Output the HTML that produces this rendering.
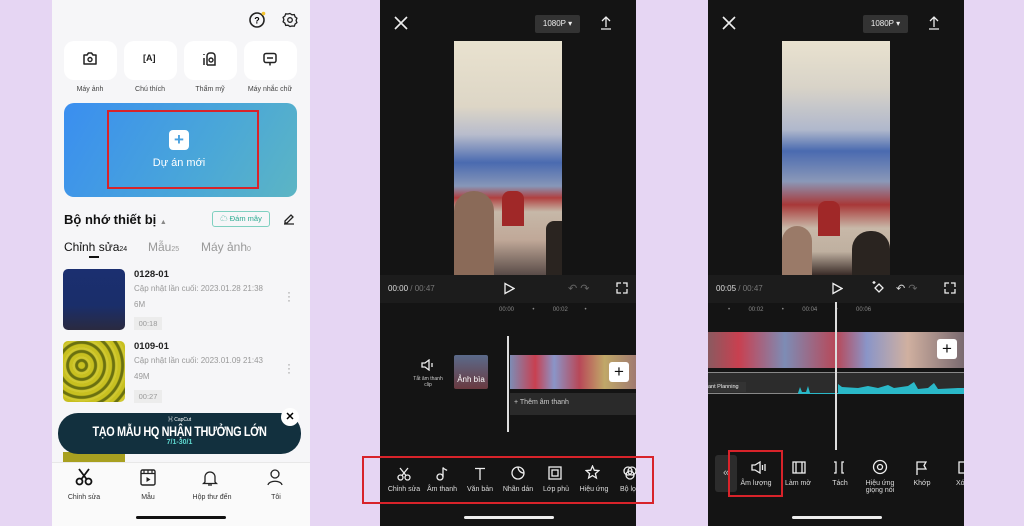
<!DOCTYPE html>
<html><head><meta charset="utf-8"><style>
*{margin:0;padding:0;box-sizing:border-box}
body{width:1024px;height:526px;background:#e6d6f3;position:relative;overflow:hidden;font-family:"Liberation Sans","Noto Sans CJK SC",sans-serif}
.a{position:absolute}
.p1{left:52px;top:0;width:258px;height:526px;background:#f6f6f8}
.dk{background:#141414;top:0;width:256px;height:526px}
.tile{background:#fff;border-radius:10px;width:53px;height:39px;top:41px}
.lbl{font-size:7px;color:#444;top:86px;width:64px;text-align:center}
.g{color:#999}
.vid{overflow:hidden;background:linear-gradient(180deg,#e9e2cf 0%,#ddd6c6 28%,#b8bccc 40%,#4a6ab0 52%,#8797b8 62%,#b04040 67%,#c6b8a8 73%,#c0a898 85%,#5a4c48 100%)}
.w{color:#eee}
.tool{font-size:7px;color:#ddd;text-align:center;width:40px}
svg.i{position:absolute;fill:none;stroke:#eee;stroke-width:1.3}
</style></head><body>
<!-- Panel 1 -->
<div class="a p1">
 <svg class="a" style="left:196px;top:11px" width="18" height="18" viewBox="0 0 18 18"><circle cx="9" cy="9" r="7" fill="none" stroke="#222" stroke-width="1.6"/><text x="9" y="12.5" font-size="9" text-anchor="middle" font-family="Liberation Sans" font-weight="bold">?</text><circle cx="15.5" cy="2.5" r="1.8" fill="#f4c430"/></svg>
 <svg class="a" style="left:230px;top:12px" width="16" height="16" viewBox="0 0 16 16"><path d="M8 1.5l2 1.3 2.3-.2.8 2.2 1.8 1.4-.8 2.2.8 2.2-1.8 1.4-.8 2.2-2.3-.2L8 14.5l-2-1.3-2.3.2-.8-2.2L1.1 9.8 1.9 7.6 1.1 5.4 2.9 4l.8-2.2 2.3.2z" fill="none" stroke="#222" stroke-width="1.3"/><circle cx="8" cy="8" r="2.3" fill="none" stroke="#222" stroke-width="1.3"/></svg>
 <div class="a tile" style="left:12px"></div><div class="a tile" style="left:72px"></div><div class="a tile" style="left:132px"></div><div class="a tile" style="left:192px"></div>
 <svg class="a" style="left:30px;top:52px" width="16" height="14" viewBox="0 0 16 14"><path d="M2 3h3l1.5-2h3L11 3h3v9H2z" fill="none" stroke="#222" stroke-width="1.5" stroke-linejoin="round"/><circle cx="8" cy="7.5" r="2" fill="none" stroke="#222" stroke-width="1.4"/></svg>
 <div class="a" style="left:91px;top:53px;font-size:9px;font-weight:bold;color:#222">[A]</div>
 <svg class="a" style="left:150px;top:52px" width="16" height="14" viewBox="0 0 16 14"><path d="M2 6v7M2 2v1M5 13V4a3 3 0 013-3h2a3 3 0 013 3v9H5" fill="none" stroke="#222" stroke-width="1.5"/><circle cx="9" cy="8" r="2" fill="none" stroke="#222" stroke-width="1.4"/></svg>
 <svg class="a" style="left:210px;top:52px" width="16" height="15" viewBox="0 0 16 15"><rect x="2" y="1.5" width="12" height="9" rx="2" fill="none" stroke="#222" stroke-width="1.5"/><path d="M5 6h6M8 10.5v3" stroke="#222" stroke-width="1.5"/></svg>
 <div class="a lbl" style="left:6px">Máy ảnh</div><div class="a lbl" style="left:66px">Chú thích</div><div class="a lbl" style="left:126px">Thẩm mỹ</div><div class="a lbl" style="left:186px">Máy nhắc chữ</div>
 <div class="a" style="left:12px;top:103px;width:233px;height:94px;border-radius:10px;background:linear-gradient(120deg,#3a8ef0,#4aa7d8 60%,#5cb5c4)"></div>
 <div class="a" style="left:117px;top:130px;width:20px;height:20px;background:#fff;border-radius:4px;color:#4aa2e0;font-size:17px;line-height:20px;text-align:center;font-weight:bold">+</div>
 <div class="a" style="left:72px;top:157px;width:110px;text-align:center;color:#fff;font-size:11px">Dự án mới</div>
 <div class="a" style="left:55px;top:110px;width:152px;height:79px;border:2.5px solid #d8232a"></div>
 <div class="a" style="left:12px;top:212px;font-size:13px;font-weight:bold;color:#111">Bộ nhớ thiết bị <span style="font-size:7px;color:#888">▲</span></div>
 <div class="a" style="left:160px;top:211px;width:58px;height:16px;border:1px solid #7fd0c0;border-radius:3px;font-size:7.5px;color:#2aaa90;text-align:center;line-height:14px">☁ Đám mây</div>
 <svg class="a" style="left:230px;top:211px" width="14" height="14" viewBox="0 0 14 14"><path d="M3 10l6-6 2 2-6 6H3zM2 13h10" fill="none" stroke="#222" stroke-width="1.3"/></svg>
 <div class="a" style="left:12px;top:240px;font-size:12px;color:#111">Chỉnh sửa<span style="font-size:7px">24</span></div>
 <div class="a" style="left:37px;top:256px;width:10px;height:2px;background:#111"></div>
 <div class="a g" style="left:96px;top:240px;font-size:12px">Mẫu<span style="font-size:7px">25</span></div>
 <div class="a g" style="left:149px;top:240px;font-size:12px">Máy ảnh<span style="font-size:7px">0</span></div>
 <div class="a" style="left:11px;top:269px;width:62px;height:61px;border-radius:5px;background:linear-gradient(180deg,#1b2f70,#1a2e6a 60%,#2a2a40)"></div>
 <div class="a" style="left:82px;top:269px;font-size:9.5px;font-weight:bold;color:#222">0128-01</div>
 <div class="a g" style="left:82px;top:284px;font-size:8px">Cập nhật lần cuối: 2023.01.28 21:38</div>
 <div class="a g" style="left:82px;top:300px;font-size:8px">6M</div>
 <div class="a g" style="left:82px;top:317px;width:28px;height:13px;background:#ececec;font-size:7.5px;text-align:center;line-height:13px">00:18</div>
 <div class="a g" style="left:235px;top:290px;font-size:12px;line-height:4px">·<br>·<br>·</div>
 <div class="a" style="left:11px;top:341px;width:62px;height:61px;border-radius:5px;background:repeating-radial-gradient(circle at 30% 40%,#c8c020 0 3px,#6a7010 4px 6px,#d0c830 7px 9px)"></div>
 <div class="a" style="left:82px;top:341px;font-size:9.5px;font-weight:bold;color:#222">0109-01</div>
 <div class="a g" style="left:82px;top:356px;font-size:8px">Cập nhật lần cuối: 2023.01.09 21:43</div>
 <div class="a g" style="left:82px;top:372px;font-size:8px">49M</div>
 <div class="a g" style="left:82px;top:390px;width:28px;height:13px;background:#ececec;font-size:7.5px;text-align:center;line-height:13px">00:27</div>
 <div class="a g" style="left:235px;top:362px;font-size:12px;line-height:4px">·<br>·<br>·</div>
 <div class="a" style="left:11px;top:452px;width:62px;height:14px;background:#a8a020"></div>
 <div class="a" style="left:6px;top:413px;width:243px;height:41px;border-radius:20px;background:#12303e;text-align:center;color:#fff;overflow:hidden">
  <div style="font-size:5px;margin-top:3px">⌘ CapCut</div>
  <div style="font-size:14px;font-weight:bold;letter-spacing:-0.5px;transform:scaleX(.78);white-space:nowrap">TẠO MẪU HQ NHẬN THƯỞNG LỚN</div>
  <div style="font-size:7px;color:#5fd8d0;font-weight:bold">7/1-30/1</div>
 </div>
 <div class="a" style="left:229px;top:408px;width:18px;height:18px;border-radius:50%;background:#fff;font-size:11px;text-align:center;line-height:18px;font-weight:bold">✕</div>
 <div class="a" style="left:0;top:462px;width:258px;height:64px;background:#fafafa;border-top:1px solid #e8e8e8"></div>
 <svg class="a" style="left:23px;top:468px" width="18" height="18" viewBox="0 0 18 18"><circle cx="4.5" cy="13.5" r="3" fill="none" stroke="#111" stroke-width="1.8"/><circle cx="13.5" cy="13.5" r="3" fill="none" stroke="#111" stroke-width="1.8"/><path d="M6.5 11L14 1M11.5 11L4 1" stroke="#111" stroke-width="1.8"/></svg>
 <svg class="a" style="left:88px;top:469px" width="16" height="17" viewBox="0 0 16 17"><rect x="1" y="1" width="14" height="15" rx="1.5" fill="none" stroke="#222" stroke-width="1.4"/><path d="M1 4.5h14M4 1v3.5M8 1v3.5M12 1v3.5" stroke="#222" stroke-width="1.2"/><path d="M6.5 8v5l4-2.5z" fill="#222"/></svg>
 <svg class="a" style="left:150px;top:469px" width="16" height="18" viewBox="0 0 16 18"><path d="M3 13V8a5 5 0 0110 0v5l1.5 1.5h-13z M6 16h4" fill="none" stroke="#222" stroke-width="1.3"/></svg>
 <svg class="a" style="left:215px;top:468px" width="16" height="18" viewBox="0 0 16 18"><circle cx="8" cy="6" r="4" fill="none" stroke="#222" stroke-width="1.3"/><path d="M1 17c1-5 13-5 14 0" fill="none" stroke="#222" stroke-width="1.3"/></svg>
 <div class="a" style="left:6px;top:494px;width:52px;text-align:center;font-size:7px;color:#333">Chỉnh sửa</div>
 <div class="a" style="left:70px;top:494px;width:52px;text-align:center;font-size:7px;color:#333">Mẫu</div>
 <div class="a" style="left:134px;top:494px;width:52px;text-align:center;font-size:7px;color:#333">Hộp thư đến</div>
 <div class="a" style="left:198px;top:494px;width:52px;text-align:center;font-size:7px;color:#333">Tôi</div>
 <div class="a" style="left:84px;top:516px;width:90px;height:3px;border-radius:2px;background:#111"></div>
</div>

<!-- Panel 2 -->
<div class="a dk" style="left:380px">
 <svg class="i" style="left:14px;top:16px" width="14" height="14"><path d="M1 1l12 12M13 1L1 13" stroke-width="1.6"/></svg>
 <div class="a" style="left:155px;top:15px;width:45px;height:18px;background:#333;border-radius:2px;font-size:8px;color:#eee;text-align:center;line-height:18px">1080P ▾</div>
 <svg class="i" style="left:220px;top:16px" width="12" height="14"><path d="M6 11V1M2 5l4-4 4 4M1 13h10"/></svg>
 <div class="a vid" style="left:74px;top:41px;width:108px;height:234px">
  <div class="a" style="left:0;top:150px;width:40px;height:84px;border-radius:20px 20px 0 0;background:#8a6a58"></div>
  <div class="a" style="left:48px;top:150px;width:22px;height:35px;background:#a02828;border-radius:8px 8px 0 0"></div>
  <div class="a" style="left:92px;top:180px;width:16px;height:54px;background:#2a2420;border-radius:8px 0 0 0"></div>
 </div>
 <div class="a" style="left:0;top:275px;width:256px;height:28px;background:#1c1c1c"></div>
 <div class="a" style="left:8px;top:284px;font-size:8px;color:#ddd">00:00 <span style="color:#777">/ 00:47</span></div>
 <svg class="i" style="left:123px;top:282px" width="12" height="13"><path d="M2 1.5l9 5-9 5z"/></svg>
 <div class="a" style="left:188px;top:282px;font-size:11px;color:#666">↶ ↷</div>
 <svg class="i" style="left:236px;top:282px" width="12" height="12"><path d="M1 5V1h4M7 1h4v4M11 7v4H7M5 11H1V7"/></svg>
 <div class="a" style="left:119px;top:307px;font-size:6px;color:#888;white-space:nowrap">00:00 &nbsp;&nbsp;&nbsp;&nbsp;&nbsp;&nbsp;&nbsp;&nbsp;&nbsp;&nbsp;•&nbsp;&nbsp;&nbsp;&nbsp;&nbsp;&nbsp;&nbsp;&nbsp;&nbsp;&nbsp; 00:02 &nbsp;&nbsp;&nbsp;&nbsp;&nbsp;&nbsp;&nbsp;&nbsp;&nbsp;•</div>
 <svg class="i" style="left:41px;top:359px" width="14" height="12"><path d="M1 4h3l4-3v10L4 8H1z M11 4v4"/></svg>
 <div class="a" style="left:33px;top:376px;width:30px;text-align:center;font-size:5px;color:#ccc">Tắt âm thanh clip</div>
 <div class="a" style="left:74px;top:355px;width:34px;height:34px;background:linear-gradient(#5a6a8a,#6a3a40);border-radius:2px;font-size:8px;color:#fff;text-align:center;padding-top:20px">Ảnh bìa</div>
 <div class="a" style="left:127px;top:336px;width:2px;height:96px;background:#ddd"></div>
 <div class="a" style="left:130px;top:355px;width:126px;height:34px;background:linear-gradient(90deg,#7d8cb5,#c84050 20%,#8a95c8 35%,#b84858 55%,#c0a868 75%,#a07a70)"></div>
 <div class="a" style="left:229px;top:362px;width:20px;height:20px;background:#fff;border-radius:3px;font-size:17px;line-height:20px;text-align:center;color:#111">+</div>
 <div class="a" style="left:130px;top:393px;width:126px;height:22px;background:#2a2a2a;font-size:7px;color:#ccc;padding:6px 4px">+ Thêm âm thanh</div>
 <div class="a" style="left:-18px;top:456px;width:292px;height:48px;border:2.5px solid #d8232a"></div>
 <svg class="i" style="left:17px;top:467px" width="14" height="14"><circle cx="3.5" cy="10.5" r="2.5"/><circle cx="10.5" cy="10.5" r="2.5"/><path d="M5 8.5L11 1M9 8.5L3 1"/></svg>
 <svg class="i" style="left:56px;top:466px" width="12" height="15"><circle cx="4" cy="11" r="3"/><path d="M7 11V1.5c1 2 3 2 4 3"/></svg>
 <svg class="i" style="left:94px;top:467px" width="12" height="13"><path d="M1 1.5h10M6 1.5V13"/></svg>
 <svg class="i" style="left:131px;top:466px" width="14" height="14"><path d="M7 1a6 6 0 106 6 6 6 0 00-6-6zM7 1a6 6 0 006 6"/></svg>
 <svg class="i" style="left:168px;top:466px" width="14" height="14"><rect x="1" y="1" width="12" height="12"/><rect x="4" y="4" width="6" height="6"/></svg>
 <svg class="i" style="left:205px;top:465px" width="15" height="15"><path d="M7.5 1l1.8 4.2 4.5.4-3.4 3 1 4.4-3.9-2.4-3.9 2.4 1-4.4-3.4-3 4.5-.4z"/></svg>
 <svg class="i" style="left:243px;top:466px" width="14" height="14"><circle cx="5" cy="5" r="4"/><circle cx="9" cy="5" r="4"/><circle cx="7" cy="9" r="4"/></svg>
 <div class="a tool" style="left:4px;top:486px">Chỉnh sửa</div><div class="a tool" style="left:42px;top:486px">Âm thanh</div><div class="a tool" style="left:80px;top:486px">Văn bản</div><div class="a tool" style="left:118px;top:486px">Nhãn dán</div><div class="a tool" style="left:156px;top:486px">Lớp phủ</div><div class="a tool" style="left:194px;top:486px">Hiệu ứng</div><div class="a tool" style="left:240px;top:486px;text-align:left">Bộ lọ</div>
 <div class="a" style="left:84px;top:516px;width:90px;height:3px;border-radius:2px;background:#eee"></div>
</div>

<!-- Panel 3 -->
<div class="a dk" style="left:708px">
 <svg class="i" style="left:14px;top:16px" width="14" height="14"><path d="M1 1l12 12M13 1L1 13" stroke-width="1.6"/></svg>
 <div class="a" style="left:155px;top:15px;width:45px;height:18px;background:#333;border-radius:2px;font-size:8px;color:#eee;text-align:center;line-height:18px">1080P ▾</div>
 <svg class="i" style="left:220px;top:16px" width="12" height="14"><path d="M6 11V1M2 5l4-4 4 4M1 13h10"/></svg>
 <div class="a vid" style="left:74px;top:41px;width:108px;height:234px;background:linear-gradient(180deg,#e9e2cf 0%,#d8d3c8 20%,#b0b8cc 38%,#4a6ab0 47%,#8a98b8 60%,#a83838 70%,#c8b8a8 80%,#bfb0a0 90%,#3a2c28 100%)">
  <div class="a" style="left:0;top:185px;width:30px;height:49px;border-radius:15px 15px 0 0;background:#9a7a68"></div>
  <div class="a" style="left:36px;top:160px;width:22px;height:35px;background:#a02828;border-radius:8px 8px 0 0"></div>
  <div class="a" style="left:70px;top:190px;width:38px;height:44px;background:#2a2420;border-radius:18px 18px 0 0"></div>
 </div>
 <div class="a" style="left:0;top:275px;width:256px;height:28px;background:#1c1c1c"></div>
 <div class="a" style="left:8px;top:284px;font-size:8px;color:#ddd">00:05 <span style="color:#777">/ 00:47</span></div>
 <svg class="i" style="left:123px;top:282px" width="12" height="13"><path d="M2 1.5l9 5-9 5z"/></svg>
 <svg class="i" style="left:163px;top:280px" width="16" height="16"><path d="M8 4l4 4-4 4-4-4z M3 1v3M1.5 2.5h3"/></svg>
 <div class="a" style="left:188px;top:282px;font-size:11px;color:#ddd">↶ <span style="color:#666">↷</span></div>
 <svg class="i" style="left:236px;top:282px" width="12" height="12"><path d="M1 5V1h4M7 1h4v4M11 7v4H7M5 11H1V7"/></svg>
 <div class="a" style="left:20px;top:307px;font-size:6px;color:#888;white-space:nowrap">•&nbsp;&nbsp;&nbsp;&nbsp;&nbsp;&nbsp;&nbsp;&nbsp;&nbsp;&nbsp; 00:02 &nbsp;&nbsp;&nbsp;&nbsp;&nbsp;&nbsp;&nbsp;&nbsp;&nbsp;&nbsp;•&nbsp;&nbsp;&nbsp;&nbsp;&nbsp;&nbsp;&nbsp;&nbsp;&nbsp;&nbsp; 00:04 &nbsp;&nbsp;&nbsp;&nbsp;&nbsp;&nbsp;&nbsp;&nbsp;&nbsp;&nbsp;•&nbsp;&nbsp;&nbsp;&nbsp;&nbsp;&nbsp;&nbsp;&nbsp;&nbsp;&nbsp; 00:06</div>
 <div class="a" style="left:0;top:332px;width:256px;height:36px;background:linear-gradient(90deg,#8a5a60,#c84050 12%,#7d8cb5 30%,#b84858 50%,#8a95c8 62%,#d0b0a0 78%,#7a6a70)"></div>
 <div class="a" style="left:229px;top:339px;width:20px;height:20px;background:#fff;border-radius:3px;font-size:17px;line-height:20px;text-align:center;color:#111">+</div>
 <div class="a" style="left:0;top:372px;width:256px;height:22px;background:#2c2c2c;border-top:1px solid #888;border-bottom:1px solid #888"></div>
 <div class="a" style="left:0;top:382px;width:38px;height:10px;background:#333;font-size:5.5px;color:#eee;line-height:10px">ant Planning</div>
 <svg class="a" style="left:90px;top:376px" width="166" height="18"><path d="M0 17L2 11 4 16 8 16 10 10 12 17H40V8L44 11 60 12 70 10 80 12 90 9 96 12 110 10 116 6 120 13 130 12 136 7 140 13 160 12 166 12V18H0z" fill="#2ab8c8"/></svg>
 <div class="a" style="left:127px;top:302px;width:2px;height:148px;background:#ddd"></div>
 <div class="a" style="left:7px;top:455px;width:22px;height:37px;background:#2c2c2c;border-radius:3px;font-size:11px;color:#bbb;text-align:center;line-height:37px">«</div>
 <div class="a" style="left:20px;top:450px;width:55px;height:47px;border:2.5px solid #d8232a"></div>
 <svg class="i" style="left:43px;top:461px" width="16" height="13"><path d="M1 4h3l5-3v11L4 9H1z M11.5 4v5M14 3v7"/></svg>
 <svg class="i" style="left:84px;top:461px" width="14" height="13"><rect x="1" y="1" width="12" height="11"/><path d="M4 1v11M10 1v11"/></svg>
 <svg class="i" style="left:125px;top:461px" width="12" height="13"><path d="M1 1h2v11H1M11 1H9v11h2"/></svg>
 <svg class="i" style="left:164px;top:459px" width="16" height="16"><circle cx="8" cy="8" r="6.5"/><circle cx="8" cy="8" r="2.5"/></svg>
 <svg class="i" style="left:207px;top:461px" width="12" height="14"><path d="M2 14V1h9l-2 3.5 2 3.5H2"/></svg>
 <svg class="i" style="left:250px;top:461px" width="8" height="13"><path d="M7 1H1v11h6"/></svg>
 <div class="a tool" style="left:28px;top:480px">Âm lượng</div><div class="a tool" style="left:70px;top:480px">Làm mờ</div><div class="a tool" style="left:112px;top:480px">Tách</div><div class="a tool" style="left:152px;top:480px">Hiệu ứng<br>giọng nói</div><div class="a tool" style="left:194px;top:480px">Khớp</div><div class="a tool" style="left:248px;top:480px;text-align:left">Xó</div>
 <div class="a" style="left:84px;top:516px;width:90px;height:3px;border-radius:2px;background:#eee"></div>
</div>
</body></html>
